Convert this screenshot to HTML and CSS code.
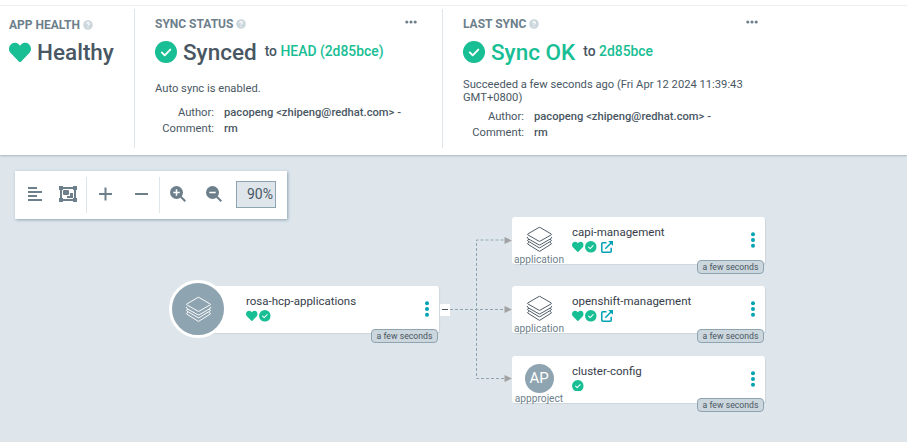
FILE: index.html
```html
<!DOCTYPE html>
<html lang="en">
<head>
<meta charset="utf-8">
<title>Application details</title>
<link rel="stylesheet" href="styles.css">
</head>
<body>
<svg class="defs" width="0" height="0" aria-hidden="true">
  <symbol id="heart" viewBox="0 0 512 512"><path d="M462.3 62.6C407.5 15.9 326 24.3 275.7 76.2L256 96.5l-19.7-20.3C186.1 24.3 104.5 15.9 49.7 62.6c-62.8 53.6-66.1 149.8-9.9 207.9l193.5 199.8c12.5 12.9 32.8 12.9 45.3 0l193.5-199.8c56.3-58.1 53-154.3-9.8-207.9z" fill="#18be94"/></symbol>
  <symbol id="check" viewBox="0 0 22 22"><circle cx="11" cy="11" r="11" fill="#18be94"/><path d="M6.8 11.4l2.9 2.9 5.6-5.7" fill="none" stroke="#fff" stroke-width="1.9" stroke-linecap="round" stroke-linejoin="round"/></symbol>
  <symbol id="help" viewBox="0 0 10 10"><circle cx="5" cy="5" r="4.8" fill="#ccd6dd"/><path d="M3.7 3.9c.1-1.8 2.8-1.6 2.6 0C6.200 4.700 5 4.700 5 5.700M5 7v.8" fill="none" stroke="#fff" stroke-width="1.100"/></symbol>
  <symbol id="layers" viewBox="0 0 28 28"><g fill="none" stroke="currentColor" stroke-width="1" stroke-linejoin="round"><path d="M13.500 1.500q.5-.3 1 0l11.600 6.700q.8.500 0 1l-11.600 6.600q-.5.300-1 0L1.900 9.200q-.8-.5 0-1z"/><path d="M1.500 11.300q-.3 1.300.4 1.700l11.600 6.600q.5.300 1 0L26.100 13q.7-.4.4-1.700"/><path d="M3.200 13.700l-1.300.8q-.8.500 0 1l11.600 7q.5.300 1 0l11.600-7q.8-.5 0-1l-1.300-.8"/><path d="M3.200 17l-1.300.8q-.8.500 0 1l11.600 7.300q.5.300 1 0l11.600-7.300q.8-.5 0-1l-1.300-.8"/></g></symbol>
  <symbol id="external" viewBox="0 0 12 12"><g fill="none" stroke="#00a2b3" stroke-width="1.500"><path d="M5.500 1.800H1.800a1 1 0 0 0-1 1v7.400a1 1 0 0 0 1 1h7.400a1 1 0 0 0 1-1V6.800M4.300 7.700L10.500 1.500"/></g><path d="M7.200 0H12v4.800L10.400 3.200 8.800 1.600z" fill="#00a2b3"/></symbol>
  <symbol id="kebab" viewBox="0 0 4 16"><g fill="#00a2b3"><circle cx="2" cy="2.300" r="2"/><circle cx="2" cy="8" r="2"/><circle cx="2" cy="13.700" r="2"/></g></symbol>
  <symbol id="more" viewBox="0 0 12 4"><g fill="#6d7f8b"><circle cx="1.800" cy="2" r="1.550"/><circle cx="6" cy="2" r="1.550"/><circle cx="10.200" cy="2" r="1.550"/></g></symbol>
</svg>

<header class="status">
  <section class="panel panel-health">
    <h2 class="label"><span>APP HEALTH</span><svg class="help"><use href="#help"/></svg></h2>
    <div class="value"><svg class="state heart"><use href="#heart"/></svg><strong class="health">Healthy</strong></div>
  </section>
  <section class="panel panel-sync">
    <h2 class="label"><span>SYNC STATUS</span><svg class="help"><use href="#help"/></svg><svg class="more"><use href="#more"/></svg></h2>
    <div class="value"><svg class="state"><use href="#check"/></svg><strong class="synced">Synced</strong><span class="target">to <a>HEAD (2d85bce)</a></span></div>
    <p class="note">Auto sync is enabled.</p>
    <dl class="meta"><dt>Author:</dt><dd>pacopeng &lt;zhipeng@redhat.com&gt; -</dd><dt>Comment:</dt><dd>rm</dd></dl>
  </section>
  <section class="panel panel-last">
    <h2 class="label"><span>LAST SYNC</span><svg class="help"><use href="#help"/></svg><svg class="more"><use href="#more"/></svg></h2>
    <div class="value"><svg class="state"><use href="#check"/></svg><strong class="ok">Sync OK</strong><span class="target">to <a>2d85bce</a></span></div>
    <p class="note">Succeeded a few seconds ago (Fri Apr 12 2024 11:39:43<br>GMT+0800)</p>
    <dl class="meta"><dt>Author:</dt><dd>pacopeng &lt;zhipeng@redhat.com&gt; -</dd><dt>Comment:</dt><dd>rm</dd></dl>
  </section>
</header>

<main class="canvas">
  <nav class="toolbar">
    <div class="tools tools-layout">
      <svg width="14" height="14" viewBox="0 0 14 14"><path d="M0 1h9M0 5h14M0 9h9M0 13h14" stroke="#6d7f8b" stroke-width="2"/></svg>
      <svg width="18" height="16" viewBox="0 0 18 16"><g fill="#6d7f8b"><path fill-rule="evenodd" d="M0 0h4v1h10V0h4v4h-1v8h1v4h-4v-1H4v1H0v-4h1V4H0zM4 3v1H3v8h1v1h10v-1h1V4h-1V3z"/><rect x="4" y="4" width="6" height="5" rx="1"/><path d="M11 7h3v5H8v-2h3z"/></g></svg>
    </div>
    <div class="tools tools-step">
      <svg width="13" height="14" viewBox="0 0 13 14"><path d="M0 7h13M6.500.5v13" stroke="#6d7f8b" stroke-width="2"/></svg>
      <svg width="13" height="14" viewBox="0 0 13 14"><path d="M0 7h13" stroke="#6d7f8b" stroke-width="2"/></svg>
    </div>
    <div class="tools tools-zoom">
      <svg width="16" height="16" viewBox="0 0 16 16"><circle cx="6.500" cy="6.500" r="6.500" fill="#6d7f8b"/><path d="M10.500 10.500l4.800 4.800" stroke="#6d7f8b" stroke-width="2"/><path d="M3.300 6.500h6.400M6.500 3.300v6.400" stroke="#fff" stroke-width="1.500"/></svg>
      <svg width="16" height="16" viewBox="0 0 16 16"><circle cx="6.500" cy="6.500" r="6.500" fill="#6d7f8b"/><path d="M10.500 10.500l4.800 4.800" stroke="#6d7f8b" stroke-width="2"/><path d="M3.300 6.500h6.400" stroke="#fff" stroke-width="1.500"/></svg>
      <span class="percent">90%</span>
    </div>
  </nav>

  <svg class="edges" width="72" height="150" viewBox="0 0 72 150">
    <g fill="none" stroke="#8fa4b1" stroke-width="1" stroke-dasharray="3 2"><path d="M10 75.500H66"/><path d="M10 75.500H36.500V6H66"/><path d="M10 75.500H36.500V144.500H66"/></g>
    <g fill="#a2a2a2"><path d="M64.500 3l7.500 3.500-7.500 3.500zM64.500 72l7.500 3.500-7.500 3.500zM64.500 141l7.500 3.500-7.500 3.500z"/></g>
  </svg>

  <article class="node root">
    <div class="disc"><svg class="layers"><use href="#layers"/></svg></div>
    <div class="info"><span class="name n-root">rosa-hcp-applications</span><div class="marks"><svg><use href="#heart"/></svg><svg><use href="#check"/></svg></div></div>
    <svg class="kebab"><use href="#kebab"/></svg>
    <span class="age">a few seconds</span>
    <span class="collapse"></span>
  </article>

  <article class="node capi">
    <div class="kind"><svg class="layers"><use href="#layers"/></svg><span>application</span></div>
    <div class="info"><span class="name n-capi">capi-management</span><div class="marks"><svg><use href="#heart"/></svg><svg><use href="#check"/></svg><svg class="ext"><use href="#external"/></svg></div></div>
    <svg class="kebab"><use href="#kebab"/></svg>
    <span class="age">a few seconds</span>
  </article>

  <article class="node openshift">
    <div class="kind"><svg class="layers"><use href="#layers"/></svg><span>application</span></div>
    <div class="info"><span class="name n-open">openshift-management</span><div class="marks"><svg><use href="#heart"/></svg><svg><use href="#check"/></svg><svg class="ext"><use href="#external"/></svg></div></div>
    <svg class="kebab"><use href="#kebab"/></svg>
    <span class="age">a few seconds</span>
  </article>

  <article class="node config">
    <div class="kind"><b class="initials">AP</b><span>appproject</span></div>
    <div class="info"><span class="name n-conf">cluster-config</span><div class="marks"><svg><use href="#check"/></svg></div></div>
    <svg class="kebab"><use href="#kebab"/></svg>
    <span class="age">a few seconds</span>
  </article>
</main>
</body>
</html>
```

FILE: styles.css
```css
* { box-sizing: border-box; margin: 0; padding: 0; }
body { width: 907px; height: 442px; overflow: hidden; background: #dee6ec; color: #495763; font-family: Roboto, sans-serif; font-size: 11.2px; display: flex; flex-direction: column; }
svg { display: block; flex: none; }
.defs { position: absolute; }

.status { height: 155px; flex: none; display: flex; padding: 4px 0 7px; background: linear-gradient(#eee, #eee) 0 5px / 100% 1px no-repeat #fff; box-shadow: 0 1px 2px rgba(90, 110, 125, .4); position: relative; }
.panel { margin-top: 5px; padding-left: 20px; border-right: 1px solid #dee6eb; }
.panel-health { width: 135px; padding-left: 9px; }
.panel-sync { width: 308px; }
.panel-last { width: 321px; border-right: 0; }
.label { display: flex; align-items: center; height: 15px; margin-top: 7px; color: #6d7f8b; font-size: 12px; font-weight: 700; line-height: 15px; }
.panel-health .label { margin-top: 8px; }
.label span { position: relative; top: .5px; }
.help { width: 10px; height: 10px; margin-left: 3px; }
.more { width: 12px; height: 4px; margin: -3px 25px 0 auto; }
.panel-last .more { margin-right: 6px; }
.value { display: flex; align-items: center; height: 26px; margin-top: 8px; }
.panel-health .value { margin-top: 7px; }
.state { width: 22px; height: 22px; margin-right: 6px; }
.heart { height: 23px; }
.value strong { font-size: 22.500px; line-height: 26px; font-weight: 500; }
.value .ok, .value a { color: #18be94; }
.target { margin: -1px 0 1px 8px; font-size: 13.900px; font-weight: 500; line-height: 26px; }
.note { line-height: 13px; }
.panel-last .note { margin-top: 13px; height: 31px; }
.panel-sync .note { margin-top: 17px; height: 23px; }
.meta { display: grid; grid-template-columns: 59px auto; column-gap: 10px; line-height: 16px; }
.panel-last .meta { grid-template-columns: 61px auto; }
.meta dt { text-align: right; }
.meta dd { font-weight: 500; white-space: nowrap; }

.canvas { flex: 1; position: relative; padding: 16px 15px; }
.toolbar { width: 272px; height: 48px; display: flex; align-items: center; background: #fff; box-shadow: 1px 1px 3px #8fa4b1; }
.tools { height: 36px; display: flex; align-items: center; }
.tools > svg { margin-bottom: 2px; }
.tools-layout { width: 72px; padding-left: 13px; gap: 17px; border-right: 1px solid #dee6eb; }
.tools-step { width: 73px; padding-left: 11.500px; gap: 23px; border-right: 1px solid #dee6eb; }
.tools-zoom { padding-left: 10px; gap: 20px; }
.percent { width: 40px; height: 27px; margin: -1px 0 0 -6px; border: 1px solid #8fa4b1; background: #dee6ec; font-size: 14px; line-height: 25px; text-align: right; padding-right: 2px; }

.edges { position: absolute; left: 440px; top: 78.500px; }
.node { position: absolute; display: flex; height: 47px; background: #fff; border-radius: 3px; box-shadow: 1px 1px 1px #ccd6dd; color: #363c4a; }
.capi, .openshift, .config { left: 512px; width: 253px; }
.capi { top: 62px; }
.openshift { top: 131px; }
.config { top: 200.500px; }
.root { left: 198px; top: 131px; width: 241px; padding-left: 48px; }
.disc { position: absolute; left: -29px; top: -6px; width: 58px; height: 58px; border: 3px solid #fff; border-radius: 50%; background: #8fa4b1; color: #fff; display: flex; align-items: center; justify-content: center; }
.layers { width: 27px; height: 27px; }
.kind { width: 54px; margin-right: 6px; padding-top: 9px; display: flex; flex-direction: column; align-items: center; color: #495763; }
.kind span { color: #6d7f8b; font-size: 10.200px; line-height: 13px; }
.initials { width: 29px; height: 29px; margin: -1px 0; border-radius: 50%; background: #8fa4b1; color: #fff; font-size: 15px; line-height: 29px; font-weight: 400; text-align: center; }
.info { padding-top: 8px; }
.name { display: block; font-size: 11.500px; line-height: 14px; white-space: nowrap; }
.marks { display: flex; gap: 1.500px; margin-top: 2px; }
.marks svg { width: 11.700px; height: 11.700px; }
.marks .ext { width: 12px; height: 12px; margin: 0 0 0 3px; }
.kebab { position: absolute; right: 10px; top: 15px; width: 4px; height: 16px; }
.age { position: absolute; right: 1px; bottom: -9.500px; width: 67px; height: 14px; border: 1px solid #8fa4b1; border-radius: 4px; background: #ccd6dd; color: #495763; font-size: 8.700px; line-height: 12px; text-align: center; white-space: nowrap; }
.collapse { position: absolute; right: -11px; top: 18px; width: 10px; height: 12px; background: linear-gradient(#495763, #495763) 2px 5px / 6px 1px no-repeat #fff; }
```
